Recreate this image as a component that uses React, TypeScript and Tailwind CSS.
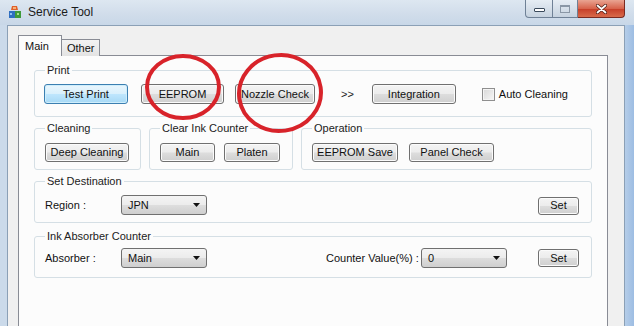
import React from "react";

const btn =
  "flex items-center justify-center whitespace-nowrap rounded-[3px] border border-[#707070] bg-[linear-gradient(180deg,#f4f4f4_0%,#ececec_48%,#dddddd_52%,#cfcfcf_100%)] text-[11px] leading-none text-[#111] shadow-[inset_0_0_0_1px_#fbfbfb]";

const focusBtn =
  "flex items-center justify-center whitespace-nowrap rounded-[3px] border border-[#3c7fb1] bg-[linear-gradient(180deg,#eaf6fd_0%,#d9f0fc_48%,#bee6fd_52%,#a7d9f5_100%)] text-[11px] leading-none text-[#111] shadow-[inset_0_0_0_1px_#cfeefc]";

const combo =
  "flex items-center justify-between rounded-[3px] border border-[#707070] bg-[linear-gradient(180deg,#f4f4f4_0%,#ececec_48%,#dddddd_52%,#cfcfcf_100%)] pl-[6px] pr-[6px] text-[11px] leading-none text-[#111]";

const group = "rounded-[3px] border border-[#d5dfe5] px-[10px] min-w-0";
const legend = "px-[2px] whitespace-nowrap text-[11px] leading-[14px] text-[#222]";
const label = "whitespace-nowrap text-[11px] leading-none text-[#111]";

function Arrow() {
  return (
    <svg width="7" height="4" viewBox="0 0 7 4">
      <path d="M0 0 H7 L3.5 4 Z" fill="#111" />
    </svg>
  );
}

function Combo({ value, className }: { value: string; className: string }) {
  return (
    <div className={`${combo} ${className}`}>
      <span>{value}</span>
      <Arrow />
    </div>
  );
}

function AppIcon() {
  return (
    <svg width="14" height="14" viewBox="0 0 14 14">
      <path d="M4 1 L9 1 L10 5 L3 5 Z" fill="#e0602a" />
      <rect x="5" y="2" width="3" height="2" fill="#f5b27a" />
      <rect x="1" y="6" width="6" height="7" fill="#2f6fc0" />
      <rect x="7" y="6" width="6" height="7" fill="#3e9a3a" />
      <rect x="2" y="8" width="2" height="2" fill="#8fc0f0" />
      <rect x="9" y="8" width="2" height="2" fill="#a5de8e" />
    </svg>
  );
}

export default function App() {
  return (
    <div
      className="relative h-[326px] w-[634px] overflow-hidden bg-[#c9d9ea]"
      style={{ fontFamily: '"Liberation Sans", Arial, sans-serif' }}
    >
      {/* Title bar */}
      <div className="flex h-[25px] items-start bg-[linear-gradient(180deg,#dde7f1_0%,#d0dcea_60%,#c8d7e8_100%)]">
        <div className="ml-[8px] mt-[5px]">
          <AppIcon />
        </div>
        <div className="ml-[6px] mt-[5px] text-[12px] leading-[14px] text-[#1b1b1b]">
          Service Tool
        </div>
        <div className="ml-auto mr-[9px] flex">
          <div className="flex h-[18px] w-[28px] items-center justify-center rounded-bl-[4px] border border-t-0 border-[#6f8196] bg-[linear-gradient(180deg,#e6edf4,#c6d2df)]">
            <div className="mt-[3px] h-[4px] w-[11px] rounded-[1px] border border-[#3a4a5c] bg-white" />
          </div>
          <div className="flex h-[18px] w-[25px] items-center justify-center border border-l-0 border-t-0 border-[#6f8196] bg-[linear-gradient(180deg,#e6edf4,#c6d2df)]">
            <div className="h-[8px] w-[10px] border border-t-2 border-[#8a97a6] bg-transparent" />
          </div>
          <div className="flex h-[18px] w-[47px] items-center justify-center rounded-br-[4px] border border-l-0 border-t-0 border-[#7a2a20] bg-[linear-gradient(180deg,#e9a492_0%,#d7634c_50%,#c7402a_55%,#d86a4a_100%)]">
            <svg width="11" height="10" viewBox="0 0 11 10">
              <path d="M1.5 1.5 L9.5 8.5 M9.5 1.5 L1.5 8.5" stroke="#4a1a12" strokeWidth="3.2" strokeLinecap="round" />
              <path d="M1.5 1.5 L9.5 8.5 M9.5 1.5 L1.5 8.5" stroke="#fff" strokeWidth="1.8" strokeLinecap="round" />
            </svg>
          </div>
        </div>
      </div>

      {/* Body with frame */}
      <div className="flex h-[301px]">
        <div className="w-[7px] bg-[#cbdaea]" />
        <div className="flex-1 border-l border-r border-t border-[#8ba0b6] bg-[#f0f0f0] pl-[10px] pr-[16px] pt-[9px]">
          {/* Tabs */}
          <div className="flex h-[21px] items-end">
            <div className="relative z-10 flex h-[21px] w-[44px] items-start border border-b-0 border-[#898c95] bg-[#fcfcfc] pl-[6px] pt-[4px] text-[11px] leading-[13px] text-[#111]">
              Main
            </div>
            <div className="flex h-[17px] w-[38px] items-start border border-b-0 border-l-0 border-[#898c95] bg-[linear-gradient(180deg,#f3f3f3,#e3e3e3)] pl-[5px] pt-[2px] text-[11px] leading-[13px] text-[#111]">
              Other
            </div>
          </div>

          {/* Tab page */}
          <div className="-mt-px h-[300px] border border-[#898c95] bg-[#fcfcfc] pl-[15px] pr-[15px] pt-[7px]">
            {/* Print */}
            <fieldset className={`${group} h-[54px]`}>
              <legend className={legend}>Print</legend>
              <div className="mt-[7px] flex items-center">
                <div className={`${focusBtn} ml-[-1px] h-[20px] w-[84px]`}>Test Print</div>
                <div className={`${btn} ml-[13px] h-[20px] w-[83px]`}>EEPROM</div>
                <div className={`${btn} ml-[11px] h-[20px] w-[80px]`}>Nozzle Check</div>
                <div className="ml-[26px] text-[11px] leading-none text-[#222]">&gt;&gt;</div>
                <div className={`${btn} ml-[18px] h-[20px] w-[84px]`}>Integration</div>
                <div className="ml-[26px] h-[13px] w-[13px] border border-[#8f8f8f] bg-[linear-gradient(135deg,#d8d8d8,#f7f7f7)] shadow-[inset_0_0_0_1px_#f4f4f4]" />
                <div className={`${label} ml-[4px]`}>Auto Cleaning</div>
              </div>
            </fieldset>

            {/* Row 2 */}
            <div className="mt-[4px] flex gap-[8px]">
              <fieldset className={`${group} h-[49px] w-[107px]`}>
                <legend className={legend}>Cleaning</legend>
                <div className="mt-[8px] flex">
                  <div className={`${btn} h-[19px] w-[84px]`}>Deep Cleaning</div>
                </div>
              </fieldset>
              <fieldset className={`${group} h-[49px] w-[144px]`}>
                <legend className={legend}>Clear Ink Counter</legend>
                <div className="mt-[8px] flex gap-[9px]">
                  <div className={`${btn} h-[19px] w-[55px]`}>Main</div>
                  <div className={`${btn} h-[19px] w-[56px]`}>Platen</div>
                </div>
              </fieldset>
              <fieldset className={`${group} h-[49px] flex-1`}>
                <legend className={legend}>Operation</legend>
                <div className="mt-[8px] flex gap-[11px]">
                  <div className={`${btn} h-[19px] w-[86px]`}>EEPROM Save</div>
                  <div className={`${btn} h-[19px] w-[85px]`}>Panel Check</div>
                </div>
              </fieldset>
            </div>

            {/* Set Destination */}
            <fieldset className={`${group} mt-[4px] h-[49px] pr-[12px]`}>
              <legend className={legend}>Set Destination</legend>
              <div className="mt-[7px] flex items-center">
                <div className={`${label} w-[76px]`}>Region :</div>
                <Combo value="JPN" className="h-[20px] w-[86px]" />
                <div className={`${btn} ml-auto mt-[1px] h-[18px] w-[41px]`}>Set</div>
              </div>
            </fieldset>

            {/* Ink Absorber Counter */}
            <fieldset className={`${group} mt-[6px] h-[49px] pr-[12px]`}>
              <legend className={legend}>Ink Absorber Counter</legend>
              <div className="mt-[5px] flex items-center">
                <div className={`${label} w-[76px]`}>Absorber :</div>
                <Combo value="Main" className="h-[20px] w-[86px]" />
                <div className={`${label} ml-[119px] w-[95px]`}>Counter Value(%) :</div>
                <Combo value="0" className="h-[20px] w-[86px]" />
                <div className={`${btn} ml-auto h-[18px] w-[41px]`}>Set</div>
              </div>
            </fieldset>
          </div>
        </div>
        <div className="w-[9px] bg-[linear-gradient(90deg,#b5cde8,#9dbde3)]" />
      </div>

      {/* Red hand-drawn circles over the window */}
      <svg className="pointer-events-none absolute left-0 top-0" width="634" height="326">
        <ellipse cx="183" cy="87" rx="36" ry="31" fill="none" stroke="#d8232a" strokeWidth="4" />
        <ellipse cx="280" cy="93" rx="41" ry="38" fill="none" stroke="#d8232a" strokeWidth="4" transform="rotate(-8 280 93)" />
      </svg>
    </div>
  );
}
